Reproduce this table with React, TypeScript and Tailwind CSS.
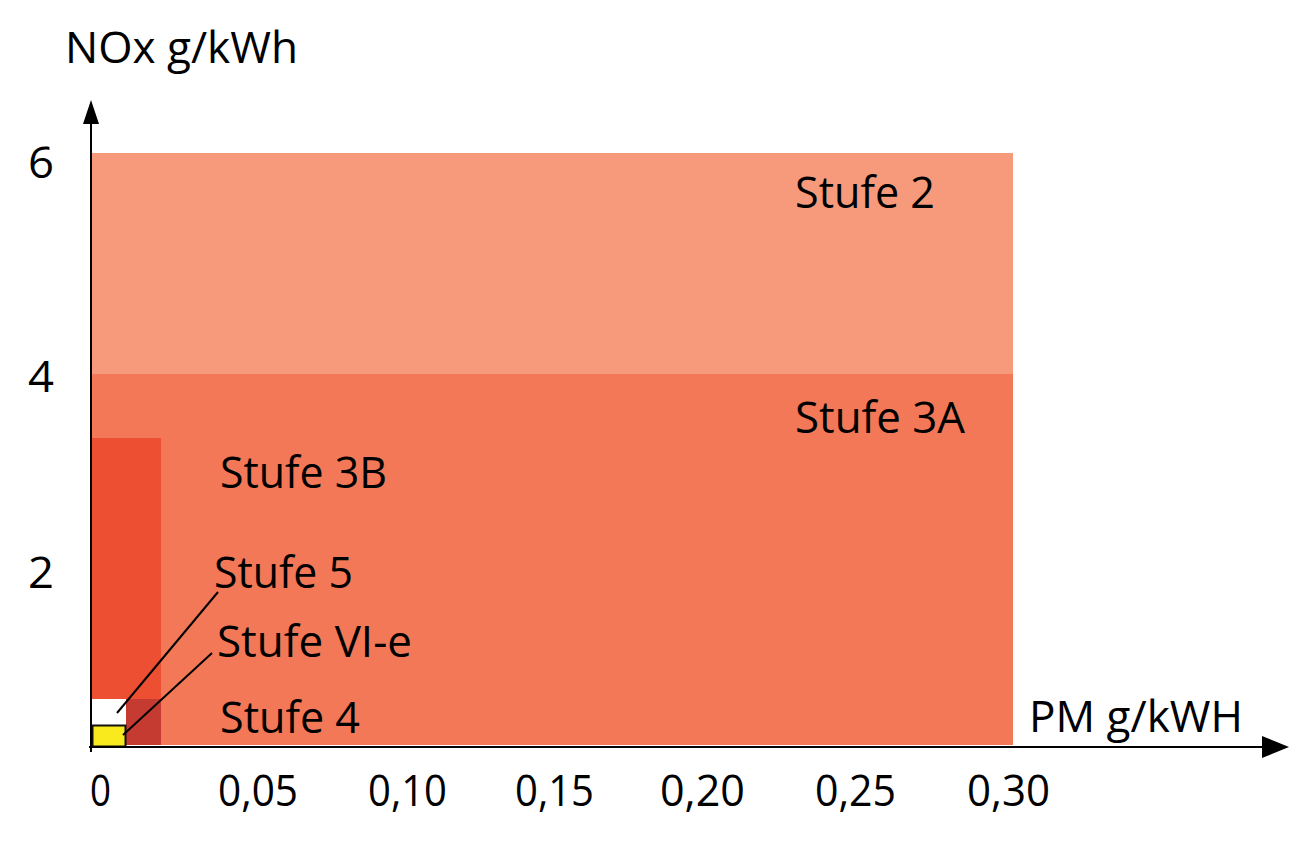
export default function App() {
  const font = "'Open Sans', 'Noto Sans', sans-serif";

  const labels: { text: string; x: number; y: number; w: number }[] = [
    { text: "NOx g/kWh", x: 65, y: 63, w: 233 },
    { text: "Stufe 2", x: 795, y: 208, w: 140 },
    { text: "Stufe 3A", x: 795, y: 433, w: 170 },
    { text: "Stufe 3B", x: 220, y: 488, w: 167 },
    { text: "Stufe 5", x: 214, y: 588, w: 139 },
    { text: "Stufe VI-e", x: 217, y: 657, w: 195 },
    { text: "Stufe 4", x: 220, y: 733, w: 140 },
    { text: "PM g/kWH", x: 1029, y: 732, w: 214 },
  ];

  const yTicks = [
    { text: "6", y: 178 },
    { text: "4", y: 392 },
    { text: "2", y: 588 },
  ];

  const xTicks = [
    { text: "0", x: 90, w: 21 },
    { text: "0,05", x: 218, w: 80 },
    { text: "0,10", x: 368, w: 79 },
    { text: "0,15", x: 515, w: 79 },
    { text: "0,20", x: 660, w: 85 },
    { text: "0,25", x: 815, w: 81 },
    { text: "0,30", x: 967, w: 83 },
  ];

  return (
    <div className="h-[847px] w-[1296px] overflow-hidden bg-white">
      <svg width="1296" height="847" viewBox="0 0 1296 847" className="block">
        {/* emission bands */}
        <rect x="91" y="153" width="922" height="221" fill="#f79a7c" />
        <rect x="91" y="374" width="922" height="371" fill="#f27857" />
        <rect x="91" y="438" width="70" height="261" fill="#ec4f32" />
        <rect x="126" y="699" width="35" height="46" fill="#c53a31" />
        <rect x="91" y="699" width="35" height="26" fill="#ffffff" />
        <rect x="92.5" y="725.5" width="33" height="21" fill="#f8ea1c" stroke="#111" strokeWidth="2" />

        {/* leader lines */}
        <line x1="117" y1="713" x2="218" y2="592" stroke="#000" strokeWidth="2" />
        <line x1="123" y1="735" x2="212" y2="653" stroke="#000" strokeWidth="2" />

        {/* axes */}
        <line x1="91" y1="118" x2="91" y2="752" stroke="#000" strokeWidth="2" />
        <polygon points="91,100 83,124 99,124" fill="#000" />
        <line x1="89" y1="747" x2="1268" y2="747" stroke="#000" strokeWidth="2" />
        <polygon points="1289,747 1262,736 1262,758" fill="#000" />

        {labels.map((l) => (
          <text
            key={l.text}
            x={l.x}
            y={l.y}
            textLength={l.w}
            lengthAdjust="spacingAndGlyphs"
            fontFamily={font}
            fontSize="44"
            fill="#000"
          >
            {l.text}
          </text>
        ))}

        {yTicks.map((t) => (
          <text key={t.text} x="28" y={t.y} textLength="26" lengthAdjust="spacingAndGlyphs" fontFamily={font} fontSize="44" fill="#000">
            {t.text}
          </text>
        ))}

        {xTicks.map((t) => (
          <text
            key={t.text}
            x={t.x}
            y="806"
            textLength={t.w}
            lengthAdjust="spacingAndGlyphs"
            fontFamily={font}
            fontSize="44"
            fill="#000"
          >
            {t.text}
          </text>
        ))}
      </svg>
    </div>
  );
}
